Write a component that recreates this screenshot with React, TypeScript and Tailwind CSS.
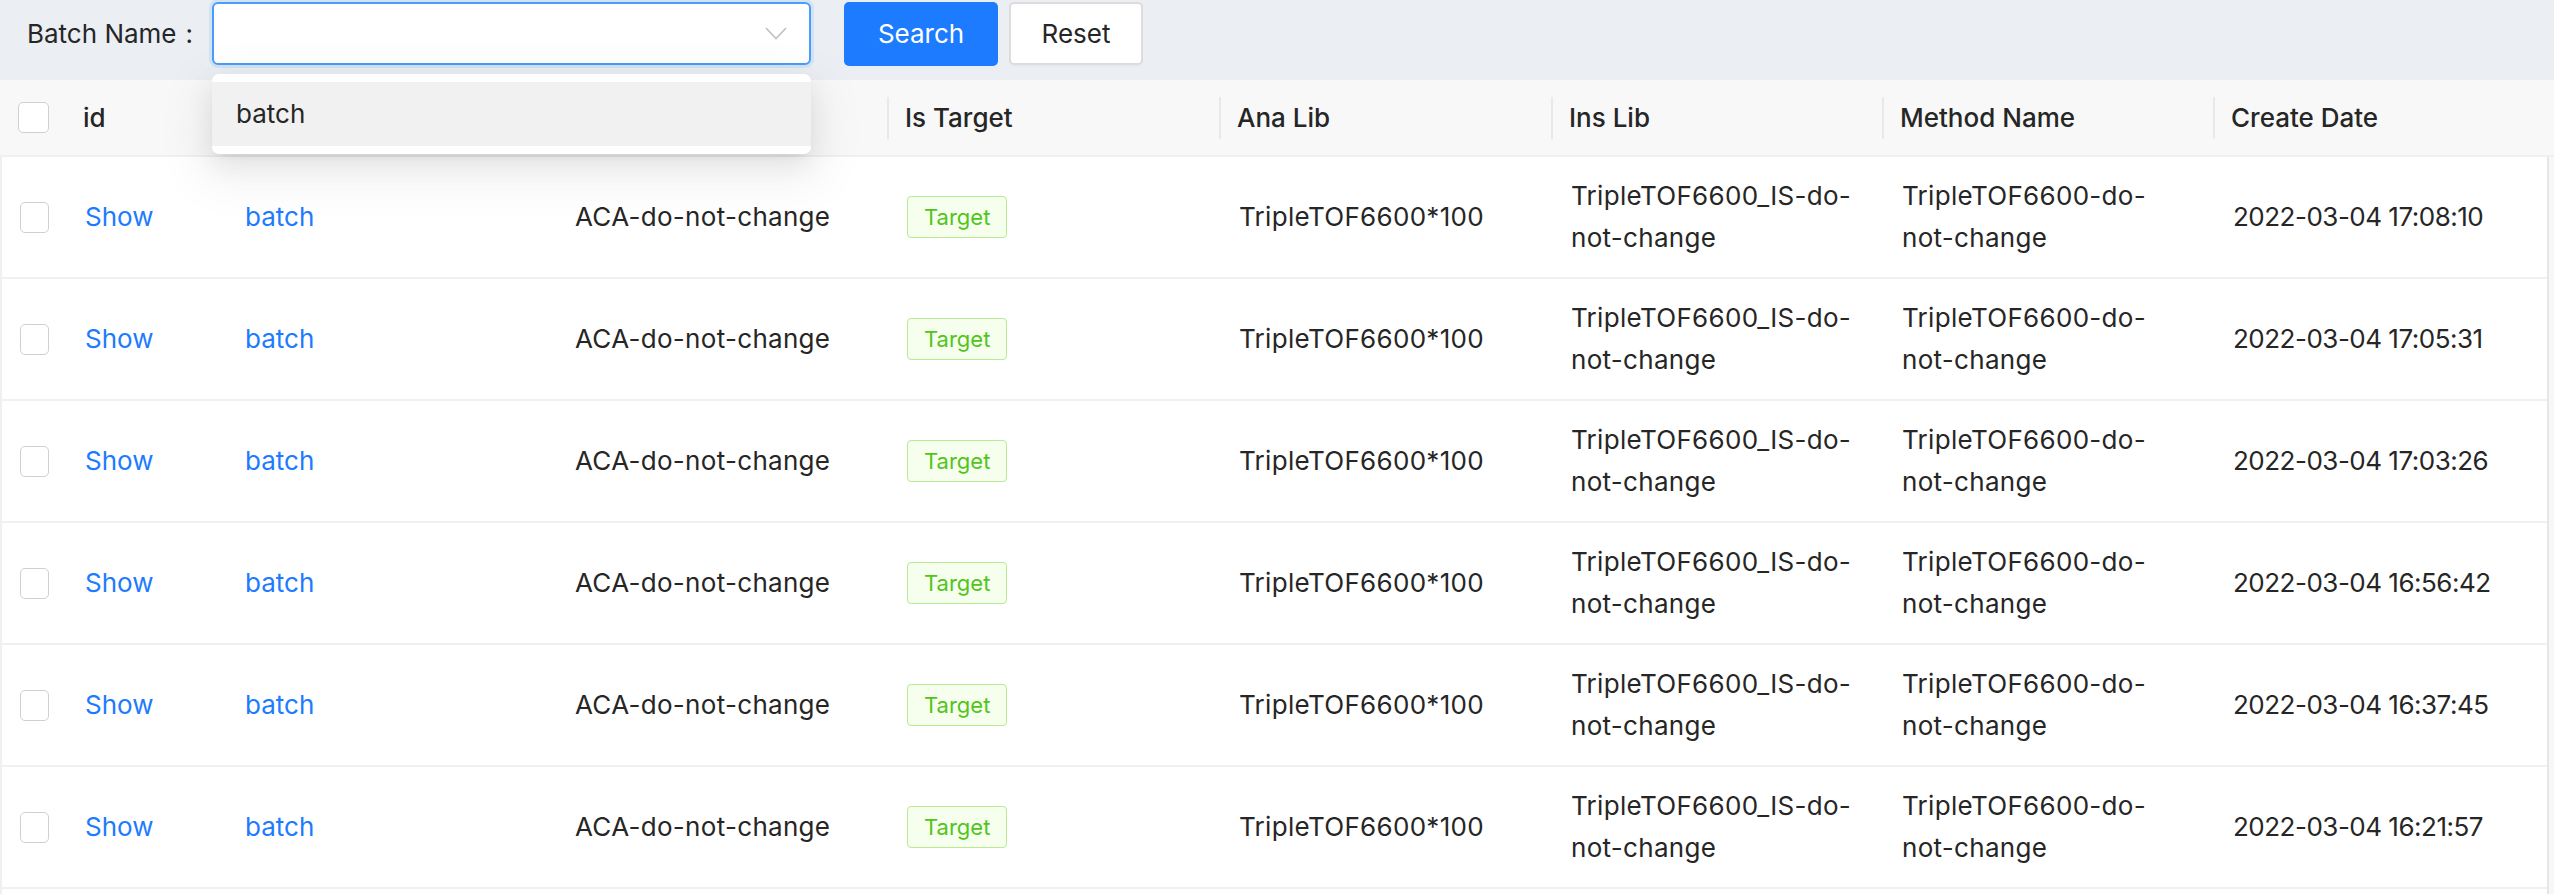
import React from "react";

const gridCols =
  "grid grid-cols-[65px_160px_330px_332px_332px_332px_331px_331px_1fr]";

const records = [
  "2022-03-04 17:08:10",
  "2022-03-04 17:05:31",
  "2022-03-04 17:03:26",
  "2022-03-04 16:56:42",
  "2022-03-04 16:37:45",
  "2022-03-04 16:21:57",
];

const headers = [
  "Batch Name",
  "Project Name",
  "Is Target",
  "Ana Lib",
  "Ins Lib",
  "Method Name",
  "Create Date",
];

function Checkbox() {
  return (
    <span className="block w-[31px] h-[31px] rounded-[5px] border-[1.5px] border-[#d0d0d0] bg-white" />
  );
}

function FilterBar() {
  return (
    <div className="h-[80px] bg-[#ebeef3] flex items-start pt-[2px] pl-[27px]">
      <label className="h-[63px] flex items-center text-[#262626] mr-[19px]">
        Batch Name<span className="ml-[9px]">:</span>
      </label>
      <div className="relative w-[599px] h-[63px]">
        <div className="w-full h-full bg-white rounded-[6px] border-2 border-[#4a9dfb] shadow-[0_0_0_3px_rgba(24,144,255,0.12)] flex items-center justify-end pr-[22px]">
          <svg width="22" height="13" viewBox="0 0 22 13" fill="none">
            <polyline
              points="1,1 11,11.5 21,1"
              stroke="#bfbfbf"
              strokeWidth="1.6"
            />
          </svg>
        </div>
        {/* open dropdown */}
        <div className="absolute z-10 left-0 top-[72px] w-full bg-white rounded-[7px] py-[8px] shadow-[0_10px_28px_0_rgba(0,0,0,0.08),0_5px_10px_-6px_rgba(0,0,0,0.12),0_16px_48px_14px_rgba(0,0,0,0.05)]">
          <div className="h-[64px] bg-[#f1f1f1] flex items-center px-[24px] text-[#262626]">
            batch
          </div>
        </div>
      </div>
      <button className="ml-[33px] w-[154px] h-[64px] rounded-[5px] bg-[#1d7bff] text-white">
        Search
      </button>
      <button className="ml-[11px] w-[134px] h-[63px] rounded-[5px] border-2 border-[#dcdcdc] bg-white text-[#262626] shadow-[0_2px_0_rgba(0,0,0,0.02)]">
        Reset
      </button>
    </div>
  );
}

function HeaderRow() {
  return (
    <div
      className={`${gridCols} h-[77px] bg-[#f8f8f8] border-b-2 border-[#f0f0f0] font-medium text-[#262626]`}
    >
      <div className="flex items-center pl-[18px]">
        <Checkbox />
      </div>
      <div className="flex items-center pl-[18px]">id</div>
      {headers.map((h) => (
        <div key={h} className="flex items-center">
          <span className="h-[42px] w-[2px] bg-[#e9e9e9] mr-[16px]" />
          {h}
        </div>
      ))}
    </div>
  );
}

function DataRow({ date }: { date: string }) {
  const cell = "flex items-center px-[18px]";
  return (
    <div
      className={`${gridCols} h-[122px] border-b-2 border-[#f0f0f0] bg-white text-[#262626] leading-[42px]`}
    >
      <div className={cell}>
        <Checkbox />
      </div>
      <div className={`${cell} text-[#1d7bff]`}>Show</div>
      <div className={`${cell} text-[#1d7bff]`}>batch</div>
      <div className={`${cell} tracking-[0.3px]`}>ACA-do-not-change</div>
      <div className={cell}>
        <span className="h-[42px] px-[16px] flex items-center rounded-[4px] border-[1.5px] border-[#b7eb8f] bg-[#f6ffed] text-[#52c41a] text-[22px]">
          Target
        </span>
      </div>
      <div className={`${cell} tracking-[0.3px]`}>TripleTOF6600*100</div>
      <div className={`${cell} tracking-[0.3px]`}>TripleTOF6600_IS-do-not-change</div>
      <div className="flex items-center pl-[18px] pr-[30px] tracking-[0.3px]">
        TripleTOF6600-do-not-change
      </div>
      <div className={`${cell} tracking-[-0.5px]`}>{date}</div>
    </div>
  );
}

export default function App() {
  return (
    <div className="h-screen overflow-hidden bg-white font-['Inter',sans-serif] text-[26px] leading-[42px]">
      <FilterBar />
      <HeaderRow />
      <div className="flex">
        <div className="flex-1 border-l-2 border-[#f0f0f0]">
          {records.map((d) => (
            <DataRow key={d} date={d} />
          ))}
          <div className="h-[122px] bg-white" />
        </div>
        <div className="w-[7px] bg-[#f7f7f7] border-l-2 border-[#e6e6e6]" />
      </div>
    </div>
  );
}
